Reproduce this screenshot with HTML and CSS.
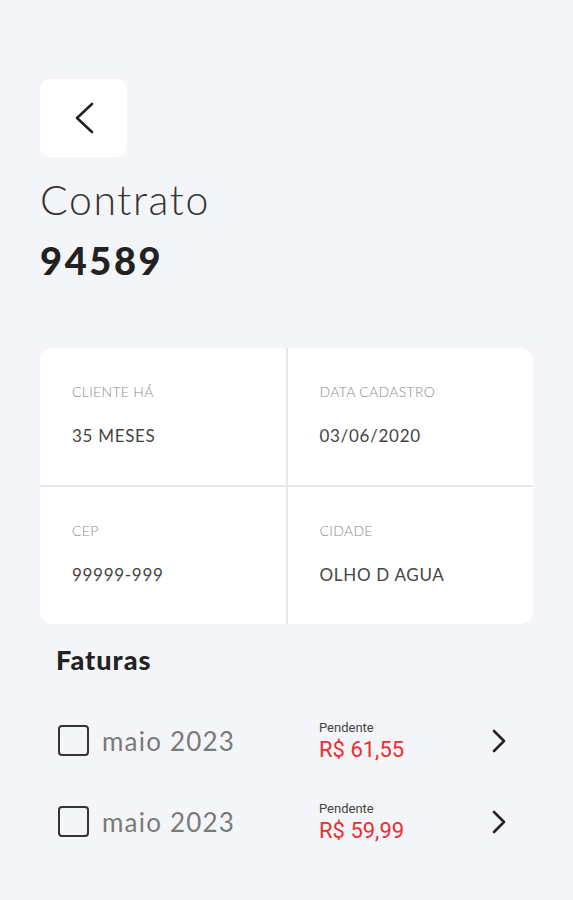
FILE: index.html
```html
<!DOCTYPE html>
<html lang="pt-BR">
<head>
    <meta charset="UTF-8">
    <meta name="viewport" content="width=device-width, initial-scale=1.0">
    <title>Contrato</title>
    <link rel="stylesheet" href="styles.css">
</head>
<body>
    <div class="page">
        <button class="back-btn" aria-label="Voltar">
            <svg width="22" height="32" viewBox="0 0 22 32" fill="none">
                <path d="M19 2 L4 16 L19 30" stroke="#222" stroke-width="2.6" stroke-linecap="round" stroke-linejoin="round"/>
            </svg>
        </button>

        <h1 class="title">Contrato</h1>
        <div class="number">94589</div>

        <div class="info-card">
            <div class="info-cell">
                <div class="info-label">CLIENTE HÁ</div>
                <div class="info-value">35 MESES</div>
            </div>
            <div class="info-cell">
                <div class="info-label">DATA CADASTRO</div>
                <div class="info-value">03/06/2020</div>
            </div>
            <div class="info-cell">
                <div class="info-label">CEP</div>
                <div class="info-value">99999-999</div>
            </div>
            <div class="info-cell">
                <div class="info-label">CIDADE</div>
                <div class="info-value">OLHO D AGUA</div>
            </div>
        </div>

        <div class="invoices">
            <h2 class="invoices-title">Faturas</h2>

            <div class="invoice-row">
                <span class="check"></span>
                <span class="invoice-month">maio 2023</span>
                <div class="invoice-status">
                    <div class="status-label">Pendente</div>
                    <div class="status-price">R$ 61,55</div>
                </div>
                <svg class="arrow" width="16" height="24" viewBox="0 0 16 24" fill="none">
                    <path d="M3 2 L13 12 L3 22" stroke="#222" stroke-width="2.6" stroke-linecap="round" stroke-linejoin="round"/>
                </svg>
            </div>

            <div class="invoice-row">
                <span class="check"></span>
                <span class="invoice-month">maio 2023</span>
                <div class="invoice-status">
                    <div class="status-label">Pendente</div>
                    <div class="status-price">R$ 59,99</div>
                </div>
                <svg class="arrow" width="16" height="24" viewBox="0 0 16 24" fill="none">
                    <path d="M3 2 L13 12 L3 22" stroke="#222" stroke-width="2.6" stroke-linecap="round" stroke-linejoin="round"/>
                </svg>
            </div>
        </div>
    </div>
</body>
</html>
```

FILE: styles.css
```css
body {
    margin: 0;
    padding: 0;
    background-color: #f3f5f9;
    font-family: Lato, "Open Sans", sans-serif;
    color: #222;
}
.page {
    padding: 79px 40px 0;
}
.back-btn {
    display: flex;
    align-items: center;
    justify-content: center;
    width: 87px;
    height: 78px;
    padding: 0;
    border: none;
    border-radius: 10px;
    background: #fff;
    cursor: pointer;
}
.title {
    margin: 19px 0 0;
    font-size: 41px;
    font-weight: 300;
    line-height: 48px;
    letter-spacing: 1.6px;
    color: #333;
}
.number {
    margin-top: 14px;
    font-size: 38px;
    font-weight: 900;
    line-height: 44px;
    letter-spacing: 2.6px;
    color: #222;
}
.info-card {
    display: grid;
    grid-template-columns: 1fr 1fr;
    gap: 2px;
    margin-top: 66px;
    background: #e6e7eb;
    border-radius: 12px;
    overflow: hidden;
}
.info-cell {
    height: 137px;
    padding: 35px 32px 0;
    background: #fff;
    box-sizing: border-box;
}
.info-label {
    font-size: 14px;
    font-weight: 300;
    line-height: 18px;
    color: #8a8a8a;
    letter-spacing: 0.3px;
}
.info-value {
    margin-top: 24px;
    font-size: 17px;
    line-height: 22px;
    color: #444;
    letter-spacing: 0.7px;
}
.invoices {
    padding: 0 0 0 16px;
}
.invoices-title {
    margin: 21px 0 0;
    font-size: 27px;
    font-weight: 900;
    line-height: 30px;
    letter-spacing: 1px;
    color: #222;
}
.invoice-row {
    display: flex;
    align-items: center;
    height: 81px;
}
.invoices-title + .invoice-row {
    margin-top: 25px;
}
.check {
    width: 31px;
    height: 31px;
    box-sizing: border-box;
    border: 2.5px solid #333;
    border-radius: 4px;
    margin-left: 2px;
}
.invoice-month {
    width: 217px;
    margin-left: 13px;
    font-size: 26px;
    font-weight: 400;
    color: #7a7a7a;
    letter-spacing: 1.2px;
}
.invoice-status {
    width: 172px;
    font-family: Roboto, sans-serif;
}
.status-label {
    font-size: 13px;
    line-height: 16px;
    color: #444;
}
.status-price {
    margin-top: 2px;
    font-size: 22px;
    line-height: 24px;
    color: #ee2d2d;
}
.arrow {
    display: block;
}
```
